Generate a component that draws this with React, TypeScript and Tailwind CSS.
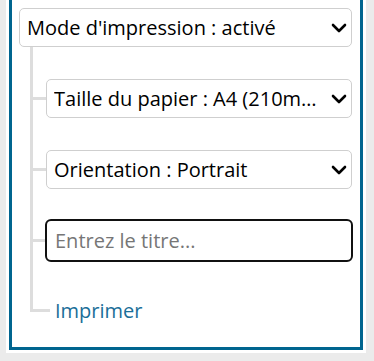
import { useState } from "react";
import { ChevronDown } from "lucide-react";

const font = "font-['Open_Sans','Noto_Sans',sans-serif]";

function Branch({
  last,
  top,
  wide,
  children,
}: {
  last?: boolean;
  top: string;
  wide?: boolean;
  children: React.ReactNode;
}) {
  return (
    <li className="flex">
      <div className={`flex shrink-0 flex-col ${wide ? "w-[20px]" : "w-4"}`}>
        <div className={`${top} border-b-[3px] border-l-[3px] border-[#dddddd]`} />
        {!last && <div className="flex-1 border-l-[3px] border-[#dddddd]" />}
      </div>
      <div className="min-w-0 flex-1">{children}</div>
    </li>
  );
}

function Select({
  value,
  options,
}: {
  value: string;
  options: { value: string; label: string }[];
}) {
  const [v, setV] = useState(value);
  return (
    <div className="relative">
      <select
        value={v}
        onChange={(e) => setV(e.target.value)}
        className="block h-[39px] w-full appearance-none truncate rounded-[5px] border border-[#cfcfcf] bg-white pl-[7px] pr-[34px] text-[20px] text-black"
      >
        {options.map((o) => (
          <option key={o.value} value={o.value}>
            {o.label}
          </option>
        ))}
      </select>
      <ChevronDown
        size={24}
        strokeWidth={2.6}
        className="pointer-events-none absolute right-[1px] top-1/2 -translate-y-1/2 text-black"
      />
    </div>
  );
}

export default function App() {
  const [title, setTitle] = useState("");

  return (
    <main className={`min-h-screen bg-[#ebebeb] pl-[6px] pr-[8px] ${font}`}>
      <div className="bg-white px-[3px] pb-[3px]">
        <div className="border-x-[3px] border-b-[3px] border-[#00658f] pl-[7px] pr-[8px] pt-[8px] pb-[21px]">
          <Select
            value="on"
            options={[
              { value: "on", label: "Mode d'impression : activé" },
              { value: "off", label: "Mode d'impression : désactivé" },
            ]}
          />

          <ul className="ml-[11px]">
            <Branch top="h-[53px]">
              <div className="pt-[32px]">
                <Select
                  value="a4"
                  options={[
                    { value: "a4", label: "Taille du papier : A4 (210mm x 297mm)" },
                    { value: "letter", label: "Taille du papier : Lettre" },
                  ]}
                />
              </div>
            </Branch>
            <Branch top="h-[53px]">
              <div className="pt-[32px]">
                <Select
                  value="portrait"
                  options={[
                    { value: "portrait", label: "Orientation : Portrait" },
                    { value: "landscape", label: "Orientation : Paysage" },
                  ]}
                />
              </div>
            </Branch>
            <Branch top="h-[53px]">
              <div className="pt-[30px]">
                <input
                  value={title}
                  onChange={(e) => setTitle(e.target.value)}
                  placeholder="Entrez le titre..."
                  className="-ml-px block h-[43px] w-[calc(100%+2px)] rounded-[6px] border-2 border-[#111111] bg-white pl-[8px] text-[20px] text-black placeholder:text-[#767676]"
                />
              </div>
            </Branch>
            <Branch last wide top="h-[50px]">
              <div className="pt-[34px] pl-[5px]">
                <a href="#" className="text-[20px] leading-[30px] text-[#1a6e98]">
                  Imprimer
                </a>
              </div>
            </Branch>
          </ul>
        </div>
      </div>
    </main>
  );
}
